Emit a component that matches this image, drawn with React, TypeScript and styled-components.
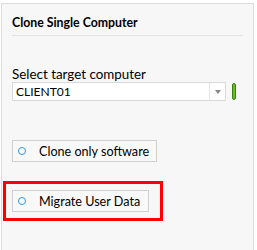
import styled, { createGlobalStyle } from "styled-components";

const Global = createGlobalStyle`
  html, body { margin: 0; padding: 0; background: #fff; }
  body { font-family: Lato, "Noto Sans", sans-serif; color: #000; }
`;

const Panel = styled.div`
  box-sizing: border-box;
  margin: 3px 3px 0 1px;
  width: 253px;
  height: 247px;
  background: #f7f7f7;
  border: 1px solid #dcdcdc;
  border-bottom: none;
  padding: 9px 10px 0 10px;
`;

const Title = styled.div`
  font-weight: 700;
  font-size: 12.3px;
  line-height: 20px;
  padding-bottom: 2px;
  border-bottom: 1px solid #e2e2e2;
`;

const Label = styled.div`
  margin-top: 31px;
  font-size: 13.4px;
  line-height: 15px;
`;

const ComboRow = styled.div`
  display: flex;
  align-items: center;
  gap: 6px;
`;

const Combo = styled.div`
  box-sizing: border-box;
  display: flex;
  width: 214px;
  height: 19px;
  background: #fff;
  border: 1px solid #d9d9d9;
`;

const ComboText = styled.div`
  flex: 1;
  font-size: 12px;
  line-height: 17px;
  padding-left: 3px;
`;

const Arrow = styled.div`
  width: 15px;
  border-left: 1px solid #e6e6e6;
  display: flex;
  align-items: center;
  justify-content: center;
  &::after {
    content: "";
    border-left: 3.5px solid transparent;
    border-right: 3.5px solid transparent;
    border-top: 4px solid #888;
  }
`;

const Pill = styled.div`
  width: 4px;
  height: 17px;
  border-radius: 2px;
  background: linear-gradient(90deg, #4a9a12, #86d930 50%, #55a818);
  border: 1px solid #3d7d12;
  box-sizing: border-box;
`;

const Highlight = styled.div<{ $on?: boolean }>`
  display: inline-block;
  margin-left: ${(p) => (p.$on ? "-9px" : "0")};
  padding: ${(p) => (p.$on ? "6px 11px 6px 6px" : "0")};
  border: ${(p) => (p.$on ? "3px solid #ff0000" : "none")};
`;

const Option = styled.div<{ $w: number }>`
  box-sizing: border-box;
  display: flex;
  align-items: center;
  width: ${(p) => p.$w}px;
  height: 22px;
  background: #f9f9f9;
  border: 1px solid #cfcfcf;
  padding-left: 5px;
  gap: 13px;
  font-size: 12.6px;
  white-space: nowrap;
`;

const Radio = styled.span`
  box-sizing: border-box;
  flex: none;
  width: 8px;
  height: 8px;
  border-radius: 50%;
  border: 1.5px solid #2f95e0;
`;

const Gap = styled.div<{ $h: number }>`
  height: ${(p) => p.$h}px;
`;

export default function App() {
  return (
    <>
      <Global />
      <Panel>
        <Title>Clone Single Computer</Title>
        <Label>Select target computer</Label>
        <ComboRow>
          <Combo>
            <ComboText>CLIENT01</ComboText>
            <Arrow />
          </Combo>
          <Pill />
        </ComboRow>
        <Gap $h={38} />
        <Highlight>
          <Option $w={145}>
            <Radio />
            Clone only software
          </Option>
        </Highlight>
        <Gap $h={19} />
        <Highlight $on>
          <Option $w={137}>
            <Radio />
            Migrate User Data
          </Option>
        </Highlight>
      </Panel>
    </>
  );
}
